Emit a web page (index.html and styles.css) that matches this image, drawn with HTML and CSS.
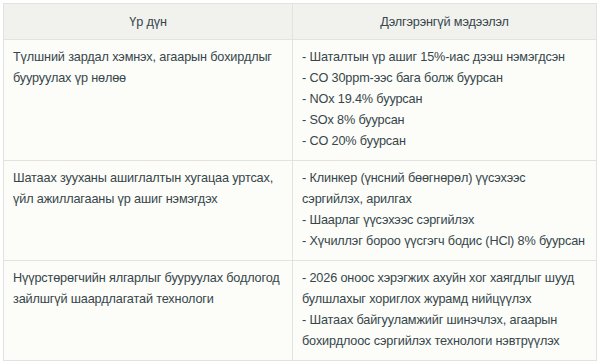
FILE: index.html
```html
<!DOCTYPE html>
<html lang="mn">
<head>
<meta charset="utf-8">
<title>Үр дүн</title>
<link rel="stylesheet" href="styles.css">
</head>
<body>
<table class="results">
  <thead>
    <tr>
      <th class="col-result">Үр дүн</th>
      <th class="col-detail">Дэлгэрэнгүй мэдээлэл</th>
    </tr>
  </thead>
  <tbody>
    <tr>
      <td>Түлшний зардал хэмнэх, агаарын бохирдлыг бууруулах үр нөлөө</td>
      <td>- Шаталтын үр ашиг 15%-иас дээш нэмэгдсэн<br>- CO 30ppm-ээс бага болж буурсан<br>- NOx 19.4% буурсан<br>- SOx 8% буурсан<br>- CO 20% буурсан</td>
    </tr>
    <tr>
      <td>Шатаах зууханы ашиглалтын хугацаа уртсах, үйл ажиллагааны үр ашиг нэмэгдэх</td>
      <td>- Клинкер (үнсний бөөгнөрөл) үүсэхээс <span class="keep">сэргийлэх, арилгах</span><br>- Шаарлаг үүсэхээс сэргийлэх<br>- Хүчиллэг бороо үүсгэгч бодис (HCl) 8% буурсан</td>
    </tr>
    <tr>
      <td>Нүүрстөрөгчийн ялгарлыг бууруулах бодлогод зайлшгүй шаардлагатай технологи</td>
      <td>- 2026 оноос хэрэгжих ахуйн хог хаягдлыг шууд булшлахыг хориглох журамд нийцүүлэх<br>- Шатаах байгууламжийг шинэчлэх, агаарын бохирдлоос сэргийлэх технологи нэвтрүүлэх</td>
    </tr>
  </tbody>
</table>
</body>
</html>
```
FILE: styles.css
```css
html, body {
  margin: 0;
  padding: 0;
  background: #ffffff;
}
body {
  padding: 3px 3px;
  font-family: "Liberation Sans", Arial, sans-serif;
  font-size: 12.7px;
  letter-spacing: -0.15px;
  color: #36464a;
}
.results {
  width: 594px;
  border-collapse: collapse;
  table-layout: fixed;
  background: #fcfcf9;
}
.results th,
.results td {
  box-sizing: border-box;
}
.col-result {
  width: 289px;
}
.results th,
.results td {
  border: 1px solid #e2e2de;
  vertical-align: top;
  text-align: left;
  line-height: 21px;
  padding: 7px 4px 8px 9px;
  font-weight: normal;
}
.results th {
  background: #f1f1ee;
  text-align: center;
  padding: 8px 5px 6px;
}
.keep {
  white-space: nowrap;
}
```
